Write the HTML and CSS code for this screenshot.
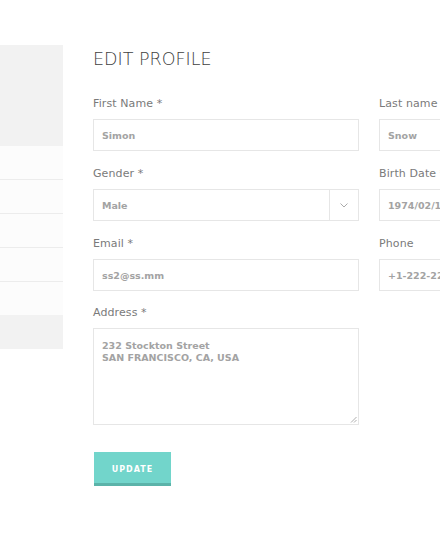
FILE: index.html
```html
<!DOCTYPE html>
<html>
<head>
<meta charset="utf-8">
<link rel="stylesheet" href="styles.css">
</head>
<body>
<div class="page">
  <aside class="sidebar">
    <div class="side-head"></div>
    <ul class="side-list">
      <li></li><li></li><li></li><li></li><li></li>
    </ul>
    <div class="side-foot"></div>
  </aside>
  <main class="content">
    <h1 class="title">EDIT PROFILE</h1>
    <form class="form">
      <div class="field">
        <label class="label">First Name *</label>
        <div class="input">Simon</div>
      </div>
      <div class="field">
        <label class="label">Last name *</label>
        <div class="input">Snow</div>
      </div>
      <div class="field">
        <label class="label">Gender *</label>
        <div class="input select">
          <span class="select-value">Male</span>
          <span class="select-arrow"><svg width="8" height="5" viewBox="0 0 8 5"><path d="M0.5 0.5 L4 4 L7.5 0.5" fill="none" stroke="#aaa" stroke-width="1"/></svg></span>
        </div>
      </div>
      <div class="field">
        <label class="label">Birth Date *</label>
        <div class="input">1974/02/12</div>
      </div>
      <div class="field">
        <label class="label">Email *</label>
        <div class="input">ss2@ss.mm</div>
      </div>
      <div class="field">
        <label class="label">Phone</label>
        <div class="input">+1-222-222-2222</div>
      </div>
      <div class="field field-address">
        <label class="label">Address *</label>
        <div class="input textarea">232 Stockton Street<br>SAN FRANCISCO, CA, USA<svg class="grip" width="7" height="7" viewBox="0 0 7 7"><path d="M6.5 1 L1 6.5 M6.5 4 L4 6.5" stroke="#999" stroke-width="0.8"/></svg></div>
      </div>
      <div class="actions">
        <button type="button" class="btn">UPDATE</button>
      </div>
    </form>
  </main>
</div>
</body>
</html>
```

FILE: styles.css
```css
html, body {
  margin: 0;
  padding: 0;
  background: #ffffff;
  overflow: hidden;
}
body {
  font-family: "DejaVu Sans", "Liberation Sans", sans-serif;
}
.page {
  display: flex;
  gap: 30px;
  padding-top: 45px;
  width: 700px;
}
.sidebar {
  width: 63px;
  flex-shrink: 0;
}
.side-head {
  height: 101px;
  background: #f2f2f2;
}
.side-list {
  list-style: none;
  margin: 0;
  padding: 0;
  background: #fcfcfc;
}
.side-list li {
  height: 33px;
}
.side-list li + li {
  border-top: 1px solid #ececec;
}
.side-foot {
  height: 34px;
  background: #f2f2f2;
}
.content {
  flex: 1;
}
.title {
  margin: 0 0 23px 0;
  font-size: 17.5px;
  line-height: 28px;
  font-weight: 300;
  color: #404040;
}
.form {
  display: grid;
  grid-template-columns: 266px 266px;
  column-gap: 20px;
  row-gap: 15px;
}
.field {
  display: flex;
  flex-direction: column;
}
.field-address {
  margin-top: -1px;
}
.label {
  font-size: 11px;
  line-height: 16px;
  color: #7a7a7a;
  margin-bottom: 7px;
  letter-spacing: 0.1px;
}
.input {
  box-sizing: border-box;
  height: 32px;
  border: 1px solid #e6e6e6;
  padding: 0 8px;
  font-size: 9.5px;
  font-weight: bold;
  color: #a3a3a3;
  display: flex;
  align-items: center;
  white-space: nowrap;
  overflow: hidden;
}
.select {
  padding: 0 0 0 8px;
  justify-content: space-between;
}
.select-arrow {
  width: 28px;
  height: 100%;
  border-left: 1px solid #e6e6e6;
  display: flex;
  align-items: center;
  justify-content: center;
}
.textarea {
  position: relative;
  display: block;
  height: 97px;
  padding: 11px 8px;
  line-height: 12px;
}
.grip {
  position: absolute;
  right: 1px;
  bottom: 1px;
}
.actions {
  grid-column: 1 / 3;
  padding-top: 12px;
}
.btn {
  box-sizing: border-box;
  width: 77px;
  height: 34px;
  margin-left: 1px;
  border: none;
  border-bottom: 3px solid #5bb3a9;
  background: #72d5cb;
  color: #ffffff;
  font-family: "DejaVu Sans", sans-serif;
  font-size: 8px;
  font-weight: bold;
  letter-spacing: 1px;
  padding: 3px 0 0 0;
}
```
